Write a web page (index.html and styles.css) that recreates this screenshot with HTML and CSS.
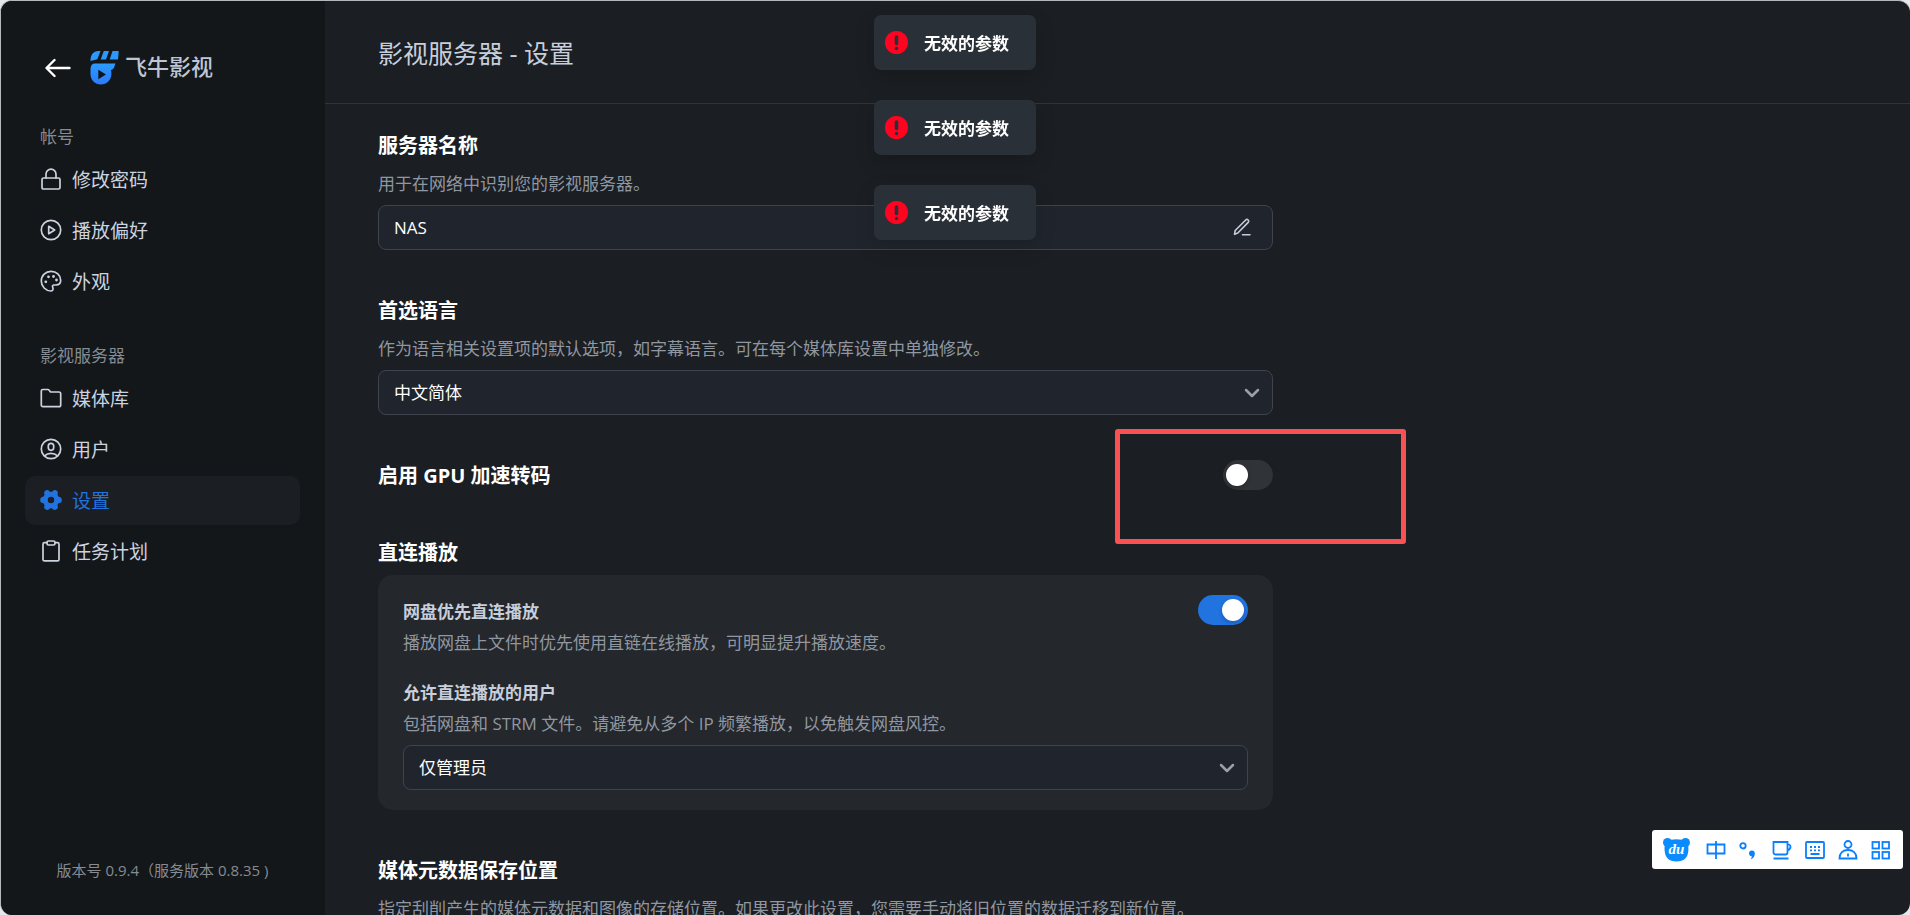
FILE: index.html
```html
<!DOCTYPE html>
<html lang="zh-CN">
<head>
    <meta charset="UTF-8">
    <meta name="viewport" content="width=device-width, initial-scale=1.0">
    <title>影视服务器 - 设置</title>
    <link rel="stylesheet" href="styles.css">
</head>
<body>
    <div class="window">
        <aside class="sidebar">
            <div class="brand">
                <a href="#" class="back" aria-label="返回">
                    <svg width="26" height="20" viewBox="0 0 26 20" fill="none" stroke="#fff" stroke-width="2.4" stroke-linecap="round" stroke-linejoin="round"><path d="M24.5 10H2M9.5 2L1.5 10l8 8"/></svg>
                </a>
                <svg class="logo" width="30" height="34" viewBox="0 0 30 34">
                    <defs>
                        <linearGradient id="logoBlue" x1="0" y1="0" x2="0" y2="1">
                            <stop offset="0" stop-color="#2c9bff"/>
                            <stop offset="1" stop-color="#2a7bff"/>
                        </linearGradient>
                    </defs>
                    <path fill="#2c98fb" d="M8.500 0h2L7.300 8.200.500 10C.500 4 3 .3 8.500 0zM13.800 0h5.200l-3 8.500h-5.300zM22.500 0h5.500c.6 0 .8.4.7 1L28 8.500h-8.300z"/>
                    <path fill="url(#logoBlue)" fill-rule="evenodd" d="M5 12.500h20.500l-1.500 4c-.6 1.600-1.600 2.200-3.200 2.400.5 1.300.7 2.700.6 4.100-.2 6-4.600 10.500-10.500 10.500S.500 29 .500 23v-5c0-3.500 1.500-5.500 4.500-5.500zM8.300 18.700v9.600l7.700-4.800z"/>
                </svg>
                <span class="brand-name">飞牛影视</span>
            </div>

            <nav class="menu">
                <div class="menu-group">
                    <h2>帐号</h2>
                    <a href="#">
                        <svg viewBox="0 0 22 22"><rect x="2" y="10" width="18" height="11" rx="1.500"/><path d="M6 10V6.200a5 5 0 0 1 10 0V10"/></svg>
                        修改密码
                    </a>
                    <a href="#">
                        <svg viewBox="0 0 22 22"><circle cx="11" cy="11" r="9.700"/><path d="M8.700 7.300v7.400l6-3.700z"/></svg>
                        播放偏好
                    </a>
                    <a href="#">
                        <svg viewBox="0 0 22 22"><path d="M11 21A10 10 0 0 1 1.300 11C1.300 5.500 5.600 1.300 11 1.300s9.700 4 9.700 9c0 3.200-2 4.700-5 4.700h-2c-1.200.2-1.500 1-1 2.200.6 1.600.6 3.600-1.700 3.800z"/><g class="dots"><circle cx="8.500" cy="6.800" r="1.400"/><circle cx="13.500" cy="6.500" r="1.400"/><circle cx="5.800" cy="11.800" r="1.400"/><circle cx="16.500" cy="10" r="1.400"/></g></svg>
                        外观
                    </a>
                </div>
                <div class="menu-group">
                    <h2>影视服务器</h2>
                    <a href="#">
                        <svg viewBox="0 0 22 22"><path d="M1.300 18V4c0-1 .5-1.500 1.500-1.500h5c.7 0 1 .3 1.400.8L10.500 5H19c1.200 0 1.700.6 1.700 1.700V18c0 1.200-.6 1.700-1.700 1.700H3c-1.200 0-1.700-.6-1.700-1.700z"/></svg>
                        媒体库
                    </a>
                    <a href="#">
                        <svg viewBox="0 0 22 22"><circle cx="11" cy="11" r="9.700"/><rect x="8.300" y="5.300" width="5.400" height="7" rx="2.700"/><path d="M4.500 17.800C8 14.600 14 14.600 17.500 17.800"/></svg>
                        用户
                    </a>
                    <a href="#" class="active">
                        <svg viewBox="0 0 22 22"><path class="gear" fill-rule="evenodd" d="M5.700 1.400c1.300-.7 2.600-.6 3.500.5.500.7 1 .9 1.800.9s1.300-.2 1.800-.9c.9-1.100 2.200-1.200 3.500-.5 1.400.8 1.900 2 1.400 3.300-.3.900-.2 1.400.2 2.100.4.700.8 1 1.700 1.100 1.500.2 2.200 1.400 2.200 3.100s-.7 2.900-2.200 3.100c-.9.100-1.300.4-1.700 1.100-.4.700-.5 1.200-.2 2.100.5 1.300 0 2.500-1.400 3.300-1.300.7-2.600.6-3.500-.5-.5-.7-1-.9-1.800-.9s-1.300.2-1.800.9c-.9 1.100-2.200 1.200-3.500.5-1.400-.8-1.900-2-1.400-3.300.3-.9.200-1.400-.2-2.100-.4-.7-.8-1-1.700-1.100C.9 13.900.2 12.700.2 11s.7-2.900 2.200-3.100c.9-.1 1.300-.4 1.700-1.100.4-.7.5-1.200.2-2.100-.5-1.300 0-2.500 1.400-3.300zM11 7.800a3.200 3.200 0 1 0 0 6.400 3.200 3.200 0 0 0 0-6.400z"/></svg>
                        设置
                    </a>
                    <a href="#">
                        <svg viewBox="0 0 22 22"><path d="M7 2.700H4.500C3.500 2.700 3 3.300 3 4.200v15.200c0 1 .5 1.500 1.500 1.500h13c1 0 1.500-.5 1.500-1.500V4.200c0-.9-.5-1.500-1.500-1.500H15"/><rect x="7" y="1" width="8" height="4" rx="1.500"/></svg>
                        任务计划
                    </a>
                </div>
            </nav>

            <p class="version">版本号 0.9.4（服务版本 0.8.35 )</p>
        </aside>

        <main class="main">
            <header class="topbar">
                <h1>影视服务器 - 设置</h1>
            </header>

            <form class="settings">
                <section>
                    <h3><label for="serverName">服务器名称</label></h3>
                    <p class="desc">用于在网络中识别您的影视服务器。</p>
                    <div class="field">
                        <input type="text" id="serverName" value="NAS">
                        <button type="button" class="edit" aria-label="编辑">
                            <svg width="18" height="18" viewBox="0 0 18 18" fill="none" stroke="#c5cbd6" stroke-width="1.600" stroke-linecap="round" stroke-linejoin="round"><path d="M1.500 16.300l.7-3.800L12.700 2c.8-.8 1.800-.8 2.500 0 .7.700.7 1.600 0 2.400L4.800 15zM9.500 16.700h7.500"/></svg>
                        </button>
                    </div>
                </section>

                <section>
                    <h3><label for="language">首选语言</label></h3>
                    <p class="desc">作为语言相关设置项的默认选项，如字幕语言。可在每个媒体库设置中单独修改。</p>
                    <div class="field">
                        <select id="language">
                            <option>中文简体</option>
                        </select>
                        <svg class="chevron" width="16" height="10" viewBox="0 0 16 10"><path d="M2 2l6 6 6-6"/></svg>
                    </div>
                </section>

                <section class="row gpu">
                    <h3><label for="gpu">启用 GPU 加速转码</label></h3>
                    <input type="checkbox" id="gpu" class="switch">
                    <div class="mark"></div>
                </section>

                <section>
                    <h3>直连播放</h3>
                    <div class="card">
                        <div class="row">
                            <div class="row-text">
                                <h4><label for="direct">网盘优先直连播放</label></h4>
                                <p class="desc">播放网盘上文件时优先使用直链在线播放，可明显提升播放速度。</p>
                            </div>
                            <input type="checkbox" id="direct" class="switch" checked>
                        </div>
                        <div class="card-item">
                            <h4><label for="allowed">允许直连播放的用户</label></h4>
                            <p class="desc">包括网盘和 STRM 文件。请避免从多个 IP 频繁播放，以免触发网盘风控。</p>
                            <div class="field">
                                <select id="allowed">
                                    <option>仅管理员</option>
                                </select>
                                <svg class="chevron" width="16" height="10" viewBox="0 0 16 10"><path d="M2 2l6 6 6-6"/></svg>
                            </div>
                        </div>
                    </div>
                </section>

                <section>
                    <h3>媒体元数据保存位置</h3>
                    <p class="desc">指定刮削产生的媒体元数据和图像的存储位置。如果更改此设置，您需要手动将旧位置的数据迁移到新位置。</p>
                </section>
            </form>
        </main>
    </div>

    <!-- 消息提示 -->
    <div class="toasts">
        <div class="toast" role="alert">
            <svg width="23" height="23" viewBox="0 0 23 23"><circle cx="11.500" cy="11.500" r="11.500" fill="#ff0420"/><path d="M11.500 6v6.500" stroke="#2a3037" stroke-width="3.600" stroke-linecap="round"/><circle cx="11.500" cy="17.500" r="1.700" fill="#2a3037"/></svg>
            无效的参数
        </div>
        <div class="toast" role="alert">
            <svg width="23" height="23" viewBox="0 0 23 23"><circle cx="11.500" cy="11.500" r="11.500" fill="#ff0420"/><path d="M11.500 6v6.500" stroke="#2a3037" stroke-width="3.600" stroke-linecap="round"/><circle cx="11.500" cy="17.500" r="1.700" fill="#2a3037"/></svg>
            无效的参数
        </div>
        <div class="toast" role="alert">
            <svg width="23" height="23" viewBox="0 0 23 23"><circle cx="11.500" cy="11.500" r="11.500" fill="#ff0420"/><path d="M11.500 6v6.500" stroke="#2a3037" stroke-width="3.600" stroke-linecap="round"/><circle cx="11.500" cy="17.500" r="1.700" fill="#2a3037"/></svg>
            无效的参数
        </div>
    </div>

    <!-- 输入法工具条 -->
    <div class="ime">
        <span class="ime-logo">
            <svg width="27" height="24" viewBox="0 0 27 24" fill="#0a8cff"><circle cx="4.500" cy="4.500" r="4.500"/><circle cx="22.500" cy="4.500" r="4.500"/><path d="M4 3.500C9 .5 18 .5 23 3.500c2.500 2 2.700 6 2.300 9.500C24.800 19.500 21 23.500 13.500 23.500S2.200 19.500 1.700 13C1.300 9.500 1.500 5.500 4 3.500z"/></svg>
            <i>du</i>
        </span>
        <svg viewBox="0 0 20 20"><path d="M1.500 4.500h17v9h-17zM10 1v18"/></svg>
        <svg viewBox="0 0 20 20"><circle cx="4" cy="5.800" r="2.700"/><path class="solid" d="M10 13.500a2.900 2.900 0 1 1 5.800 0c0 3-1.500 5-4.500 6 1-1 1.500-2 1.500-3.200-1.700 0-2.800-1.200-2.800-2.800z"/></svg>
        <svg viewBox="0 0 20 20"><path d="M1.500 2h14v10.500c0 1.300-.5 2-2 2H3.500c-1.300 0-2-.7-2-2zM15.500 4.500c3.500-.7 4.500 4 0 6M1.500 18.500h15"/></svg>
        <svg viewBox="0 0 20 20"><rect x="1" y="2" width="18" height="16" rx="1"/><path d="M5 7h2M9 7h2M13 7h2M5 10.300h2M9 10.300h2M13 10.300h2M5.500 14h9"/></svg>
        <svg viewBox="0 0 20 20"><circle cx="10" cy="4.500" r="3.500"/><path d="M1.500 18.500c0-5.500 3.500-8.500 8.500-8.500s8.500 3 8.500 8.500zM10 13.500v3"/></svg>
        <svg viewBox="0 0 20 20"><rect x="1.500" y="2" width="6.500" height="6.500"/><rect x="11.500" y="2" width="6.500" height="6.500"/><rect x="1.500" y="12" width="6.500" height="6.500"/><rect x="11.500" y="12" width="6.500" height="6.500"/></svg>
    </div>
</body>
</html>
```
FILE: styles.css
```css
* {
    box-sizing: border-box;
}

body {
    margin: 0;
    height: 100vh;
    overflow: hidden;
    background: #e4e8e8;
    color: #fff;
    font-family: "Open Sans", "Noto Sans CJK SC", sans-serif;
    font-size: 17px;
}

h1, h2, h3, h4, p {
    margin: 0;
}

.window {
    display: flex;
    height: 100vh;
    border: solid #b4baba;
    border-width: 1px 0 0 1px;
    border-radius: 12px;
    overflow: hidden;
    background: #1b1e22;
}

/* 侧边栏 */
.sidebar {
    display: flex;
    flex-direction: column;
    flex: 0 0 324px;
    padding: 50px 25px 33px 24px;
    background: #131719;
}

.brand {
    display: flex;
    align-items: center;
    height: 34px;
    padding-left: 20px;
    margin-bottom: 40px;
}

.back {
    display: flex;
}

.logo {
    margin: 0 5px 0 19px;
}

.brand-name {
    padding-bottom: 4px;
    font-size: 22px;
    font-weight: 500;
    line-height: 30px;
    color: #c0c5d3;
}

.menu {
    display: flex;
    flex-direction: column;
    gap: 38px;
}

.menu-group {
    display: flex;
    flex-direction: column;
    gap: 2px;
}

.menu-group h2 {
    margin: 0 0 4px 15px;
    font-size: 17px;
    font-weight: 400;
    line-height: 24px;
    color: #868b93;
}

.menu-group a {
    display: flex;
    align-items: center;
    gap: 10px;
    height: 49px;
    padding: 0 15px 2px;
    border-radius: 10px;
    font-size: 19px;
    color: #ccd3e0;
    text-decoration: none;
}

.menu-group a:hover,
.menu-group .active {
    background: #1b1e22;
}

.menu-group .active {
    color: #2173df;
}

.menu-group svg {
    width: 22px;
    height: 22px;
    fill: none;
    stroke: currentColor;
    stroke-width: 1.7;
    stroke-linejoin: round;
    stroke-linecap: round;
}

.menu-group .dots,
.menu-group .gear {
    fill: currentColor;
    stroke: none;
}

.version {
    margin-top: auto;
    font-size: 15px;
    line-height: 24px;
    text-align: center;
    color: #868b93;
}

/* 主内容 */
.main {
    flex: 1;
    min-width: 0;
    overflow: hidden;
}

.topbar {
    display: flex;
    align-items: center;
    height: 103px;
    padding: 0 53px;
    border-bottom: 1px solid #303338;
}

.topbar h1 {
    font-size: 25px;
    font-weight: 400;
    color: #c7cedc;
}

.settings {
    display: flex;
    flex-direction: column;
    gap: 45px;
    max-width: 1001px;
    padding: 26px 53px;
}

h3 {
    font-size: 20px;
    font-weight: 700;
    line-height: 32px;
}

h4 {
    font-size: 17px;
    font-weight: 700;
    line-height: 30px;
    color: #c7cedc;
}

.desc {
    margin: 9px 0 8px;
    line-height: 26px;
    color: #9097a1;
    white-space: nowrap;
}

.field {
    position: relative;
}

.field input,
.field select {
    display: block;
    width: 100%;
    height: 45px;
    padding: 0 15px;
    appearance: none;
    background: #20252d;
    border: 1px solid #3f444c;
    border-radius: 8px;
    color: #fff;
    font-family: inherit;
    font-size: 17px;
    outline: none;
}

.edit {
    position: absolute;
    top: 13px;
    right: 22px;
    display: flex;
    padding: 0;
    background: none;
    border: none;
    cursor: pointer;
}

.chevron {
    position: absolute;
    top: 18px;
    right: 13px;
    fill: none;
    stroke: #9aa0aa;
    stroke-width: 2.5;
    stroke-linecap: round;
    stroke-linejoin: round;
    pointer-events: none;
}

.row {
    display: flex;
    justify-content: space-between;
    align-items: flex-start;
}

.switch {
    position: relative;
    flex: none;
    width: 50px;
    height: 30px;
    margin: 0;
    appearance: none;
    background: #303337;
    border-radius: 15px;
    cursor: pointer;
}

.switch::before {
    content: "";
    position: absolute;
    top: 4px;
    left: 3px;
    width: 22px;
    height: 22px;
    border-radius: 50%;
    background: #fff;
    box-shadow: 0 2px 4px rgba(0, 0, 0, 0.2);
}

.switch:checked {
    background: #2173df;
}

.switch:checked::before {
    left: 24px;
}

.gpu {
    position: relative;
}

/* 红色标注框 */
.mark {
    position: absolute;
    top: -31px;
    right: -133px;
    width: 291px;
    height: 115px;
    border: 5px solid #fa5252;
    border-radius: 3px;
    pointer-events: none;
}

.card {
    margin-top: 6px;
    padding: 20px 25px;
    background: #24272b;
    border-radius: 15px;
}

.card .desc {
    margin: 3px 0 8px;
}

.card .row-text {
    padding-top: 2px;
}

.card .row .desc {
    margin-bottom: 22px;
}

/* 消息提示 */
.toasts {
    position: fixed;
    top: 15px;
    left: 0;
    right: 0;
    display: flex;
    flex-direction: column;
    align-items: center;
    gap: 30px;
    pointer-events: none;
}

.toast {
    display: flex;
    align-items: center;
    gap: 16px;
    height: 55px;
    padding: 0 27px 0 11px;
    background: #2a3037;
    border-radius: 7px;
    box-shadow: 0 8px 20px rgba(0, 0, 0, 0.15);
    font-weight: 700;
}

/* 输入法工具条 */
.ime {
    position: fixed;
    right: 7px;
    bottom: 46px;
    display: flex;
    align-items: center;
    gap: 13px;
    width: 251px;
    height: 39px;
    padding: 0 11px;
    background: #fff;
    border-radius: 3px;
}

.ime > svg {
    flex: none;
    width: 20px;
    height: 20px;
    fill: none;
    stroke: #0a80ff;
    stroke-width: 1.8;
}

.ime .solid {
    fill: #0a80ff;
    stroke: none;
}

.ime-logo {
    position: relative;
    display: flex;
    margin-right: 3px;
}

.ime-logo i {
    position: absolute;
    top: 2px;
    left: 0;
    right: 0;
    font-family: "Liberation Serif", serif;
    font-size: 15px;
    font-weight: 700;
    line-height: 18px;
    text-align: center;
}
```
